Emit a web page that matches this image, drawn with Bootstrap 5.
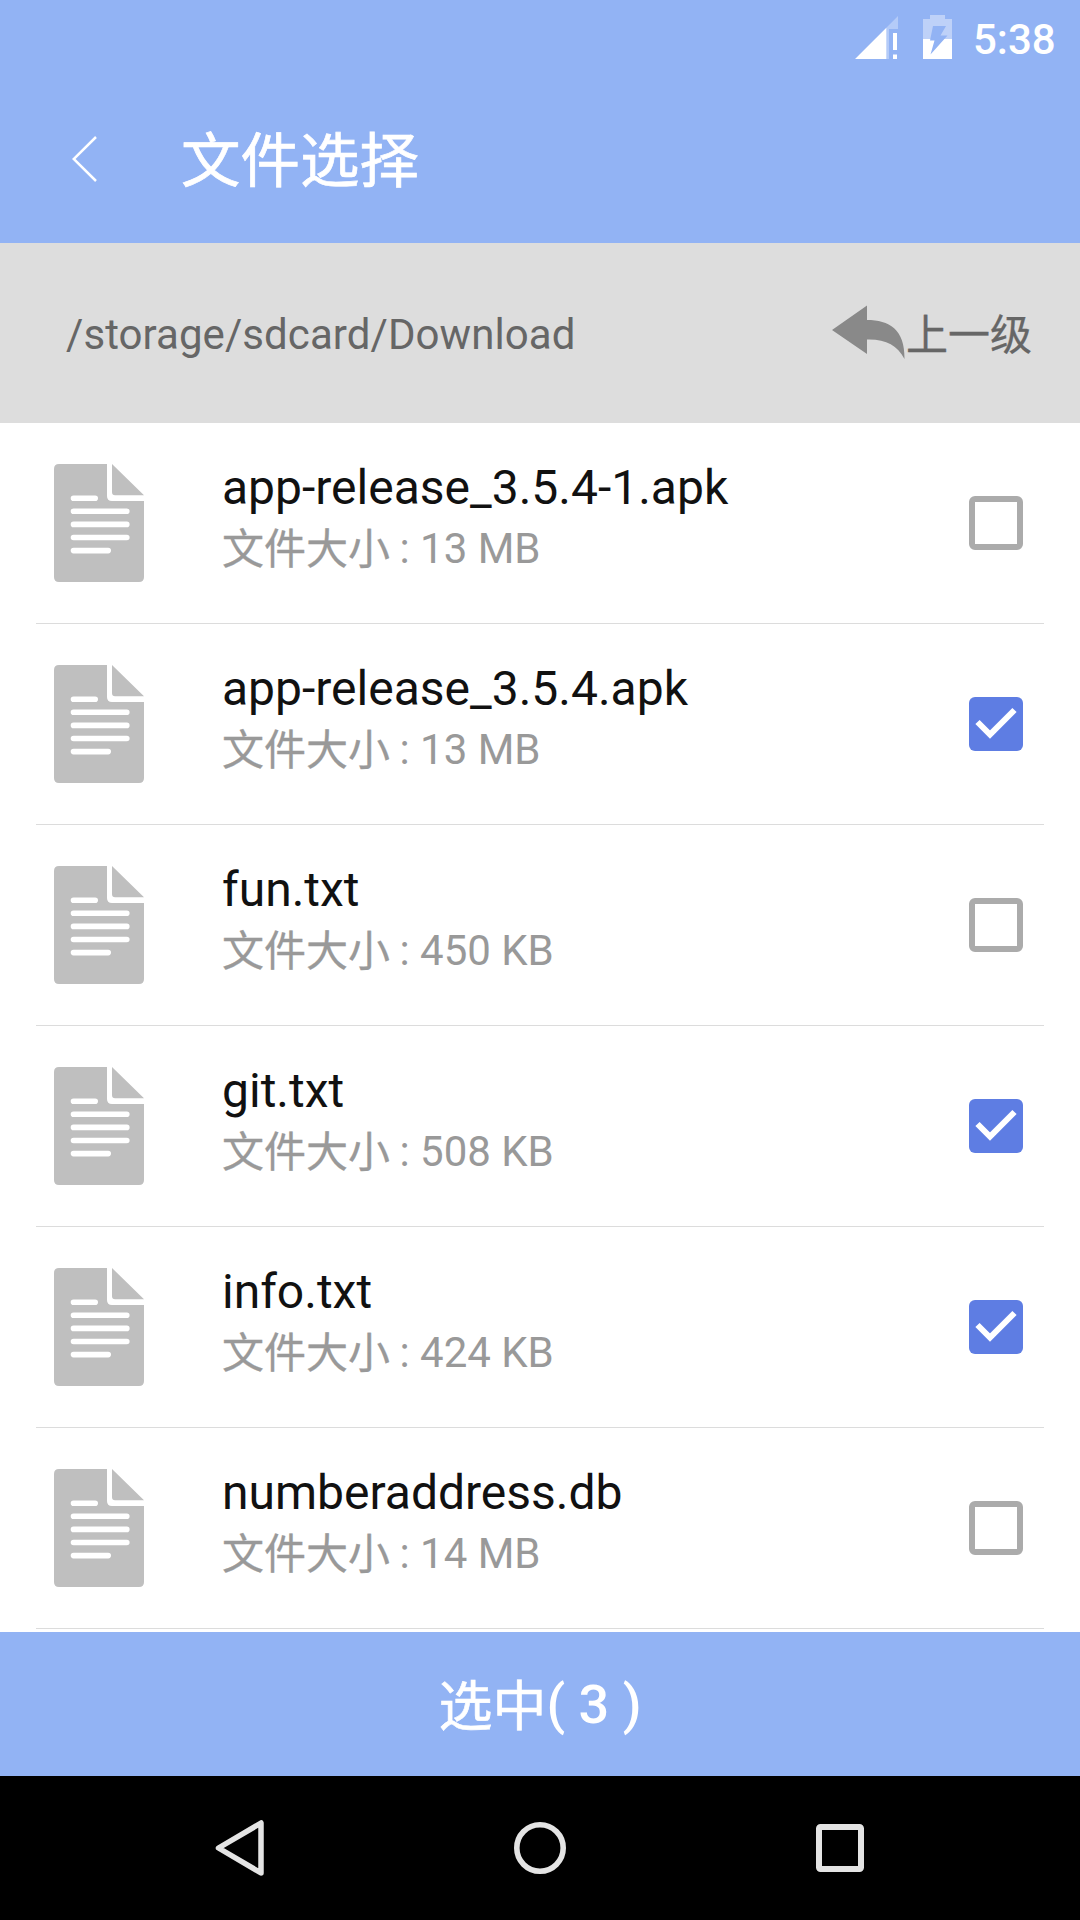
<!DOCTYPE html>
<html lang="zh-CN">
<head>
<meta charset="utf-8">
<meta name="viewport" content="width=device-width, initial-scale=1">
<title>文件选择</title>
<link href="https://cdn.jsdelivr.net/npm/bootstrap@5.3.0/dist/css/bootstrap.min.css" rel="stylesheet">
<style>
body{font-family:Roboto,"Noto Sans CJK SC",sans-serif;background:#fff;color:#111}
svg{display:block;flex:none}
.screen{height:1920px;overflow:hidden}
.brand-bg{background:#92b3f4;color:#fff}
.statusbar{height:75px;padding:15px 26px 0 855px}
.battery{margin-left:25px}
.clock{font-size:42px;font-weight:500;line-height:50px;margin-left:21px}
.titlebar{height:168px;padding:0 72px}
.titlebar h1{font-size:59.5px;font-weight:400;line-height:70px;margin:52px 0 0 84px;-webkit-text-stroke:.7px #fff}
.back-icon{margin-top:60px}
.pathbar{height:180px;background:#ddd;color:#666;font-size:42px;line-height:50px;padding:67px 48px 0 66px}
.path-text{letter-spacing:.07px}
.up-icon{margin:-5px -1px 0 0}
.up-text{margin-top:1px;-webkit-text-stroke:.3px #666}
.file-list{height:1209px}
.file-row{height:201px;flex:none;margin:0 36px;padding:0 21px 0 18px;border-bottom:1px solid #dcdcdc}
.file-text{margin-left:78px;margin-top:37px}
.file-name{font-size:48px;line-height:56px}
.file-size{font-size:42px;line-height:50px;color:#999;margin-top:8px}
.size-label{display:inline-block;line-height:40px;vertical-align:-1px;margin-right:-1px;-webkit-text-stroke:.3px #999}
.check-input.form-check-input{width:54px;height:54px;margin:-1px 0 0;border:6px solid #ababab;border-radius:6px;background-color:#fff;flex:none}
.check-input.form-check-input:checked{border:0;background-color:#5e7de3;background-size:54px 54px;background-image:url("data:image/svg+xml,%3Csvg xmlns='http://www.w3.org/2000/svg' viewBox='0 0 54 54'%3E%3Cpath d='M8.5 25 21 37.5 45.5 13' fill='none' stroke='%23fff' stroke-width='6'/%3E%3C/svg%3E")}
.confirm{height:144px;border:0;border-radius:0;font-size:54px;font-weight:500;line-height:64px;padding:2px 0 0}
.confirm-label{display:inline-block;line-height:50px;vertical-align:-3px;font-weight:400;-webkit-text-stroke:.6px #fff}
.navkeys{height:144px;background:#000;padding:0 216px 0 215px}
</style>
</head>
<body>
<svg width="0" height="0" class="position-absolute" aria-hidden="true">
  <symbol id="doc" viewBox="0 0 90 118">
    <path fill="#bfbfbf" d="M5 0H53V32Q53 37 58 37H90V113Q90 118 85 118H5Q0 118 0 113V5Q0 0 5 0ZM58 0 90 31.3H61Q58 31.3 58 28Z"/>
    <path stroke="#fff" stroke-width="5.6" stroke-linecap="round" d="M19.5 34.2H41.2M19.5 47.3H72.8M19.5 60.4H72.8M19.5 73.5H72.8M19.5 86.6H54.2"/>
  </symbol>
</svg>
<div class="screen d-flex flex-column">
  <header class="brand-bg">
    <div class="statusbar d-flex align-items-start">
      <svg width="43" height="44" viewBox="0 0 43 44"><path fill="#b4cbf8" d="M43 1V14H34V44H31V13Z"/><path fill="#fff" d="M0 44 31.3 12.7V44ZM38 18h4v17h-4ZM38 39.5h4V44h-4Z"/></svg>
      <svg class="battery" width="29" height="44" viewBox="0 0 29 44"><path fill="#bed1f8" d="M7 0H22V4H29V24H0V4H7Z"/><path fill="#fff" d="M0 24H29V44H0Z"/><path fill="#92b3f4" d="M10 11H23L17.5 20.5H24.5L7.5 39.5 11.5 25.5H7Z"/></svg>
      <span class="clock">5:38</span>
    </div>
    <div class="titlebar d-flex align-items-start">
      <svg class="back-icon" width="25" height="48" viewBox="0 0 25 48"><path d="M24 2 1.7 24 24 46" fill="none" stroke="#fff" stroke-width="2.5"/></svg>
      <h1>文件选择</h1>
    </div>
  </header>
  <div class="pathbar d-flex justify-content-between align-items-start">
    <span class="path-text">/storage/sdcard/Download</span>
    <span class="d-flex align-items-start">
      <svg class="up-icon" width="75" height="56" viewBox="0 0 75 56"><path fill="#898989" d="M0 25 35 .5V15C57 15 73 24 72.5 54 65 40 54 34 35 34.5V49Z"/></svg>
      <span class="up-text">上一级</span>
    </span>
  </div>
  <main class="file-list overflow-hidden d-flex flex-column">
    <label class="file-row d-flex align-items-center"><svg width="90" height="118"><use href="#doc"/></svg><span class="file-text flex-grow-1 align-self-start"><span class="file-name d-block">app-release_3.5.4-1.apk</span><span class="file-size d-block"><span class="size-label">文件大小</span> : 13 MB</span></span><input class="form-check-input check-input" type="checkbox"></label>
    <label class="file-row d-flex align-items-center"><svg width="90" height="118"><use href="#doc"/></svg><span class="file-text flex-grow-1 align-self-start"><span class="file-name d-block">app-release_3.5.4.apk</span><span class="file-size d-block"><span class="size-label">文件大小</span> : 13 MB</span></span><input class="form-check-input check-input" type="checkbox" checked></label>
    <label class="file-row d-flex align-items-center"><svg width="90" height="118"><use href="#doc"/></svg><span class="file-text flex-grow-1 align-self-start"><span class="file-name d-block">fun.txt</span><span class="file-size d-block"><span class="size-label">文件大小</span> : 450 KB</span></span><input class="form-check-input check-input" type="checkbox"></label>
    <label class="file-row d-flex align-items-center"><svg width="90" height="118"><use href="#doc"/></svg><span class="file-text flex-grow-1 align-self-start"><span class="file-name d-block">git.txt</span><span class="file-size d-block"><span class="size-label">文件大小</span> : 508 KB</span></span><input class="form-check-input check-input" type="checkbox" checked></label>
    <label class="file-row d-flex align-items-center"><svg width="90" height="118"><use href="#doc"/></svg><span class="file-text flex-grow-1 align-self-start"><span class="file-name d-block">info.txt</span><span class="file-size d-block"><span class="size-label">文件大小</span> : 424 KB</span></span><input class="form-check-input check-input" type="checkbox" checked></label>
    <label class="file-row d-flex align-items-center"><svg width="90" height="118"><use href="#doc"/></svg><span class="file-text flex-grow-1 align-self-start"><span class="file-name d-block">numberaddress.db</span><span class="file-size d-block"><span class="size-label">文件大小</span> : 14 MB</span></span><input class="form-check-input check-input" type="checkbox"></label>
  </main>
  <button type="button" class="btn brand-bg confirm w-100"><span class="confirm-label">选中</span>( 3 )</button>
  <nav class="navkeys d-flex justify-content-between align-items-center">
    <svg width="49" height="56" viewBox="0 0 49 56"><path d="M46 3V53L3.5 28Z" fill="none" stroke="#e4e4e4" stroke-width="5.5" stroke-linejoin="round"/></svg>
    <svg width="52" height="52" viewBox="0 0 52 52"><circle cx="26" cy="26" r="23.2" fill="none" stroke="#e4e4e4" stroke-width="5.6"/></svg>
    <svg width="48" height="48" viewBox="0 0 48 48"><rect x="3" y="3" width="42" height="42" rx="1.5" fill="none" stroke="#e4e4e4" stroke-width="6"/></svg>
  </nav>
</div>
<script src="https://cdn.jsdelivr.net/npm/bootstrap@5.3.0/dist/js/bootstrap.bundle.min.js"></script>
</body>
</html>
